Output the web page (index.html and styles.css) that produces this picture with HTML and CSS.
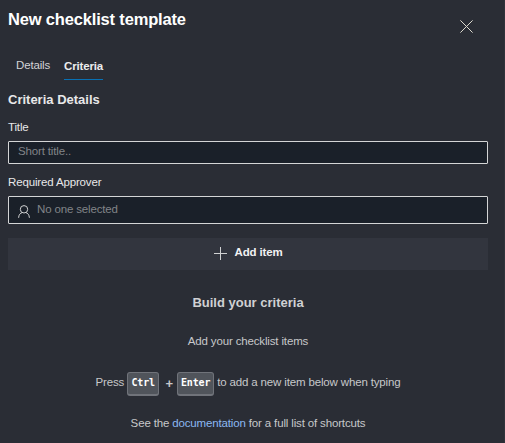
FILE: index.html
```html
<!DOCTYPE html>
<html lang="en">
<head>
<meta charset="utf-8">
<title>New checklist template</title>
<link rel="stylesheet" href="styles.css">
</head>
<body>
<main class="panel">
  <header class="header">
    <h1>New checklist template</h1>
    <button class="close" aria-label="Close"><svg width="13" height="13" viewBox="0 0 13 13"><path d="M.4.4l12.2 12.2M12.6.4L.4 12.6"/></svg></button>
  </header>
  <nav class="tabs">
    <a class="tab">Details</a>
    <a class="tab active">Criteria</a>
  </nav>
  <h2>Criteria Details</h2>
  <div class="label">Title</div>
  <div class="field short"><span>Short title..</span></div>
  <div class="label second">Required Approver</div>
  <div class="field person">
    <svg width="12" height="13" viewBox="0 0 12 13"><circle cx="6" cy="4.3" r="3.7"/><path d="M.6 12.8c.2-3.1 1.7-4.8 3.6-5.2M11.4 12.8c-.2-3.1-1.7-4.8-3.6-5.2"/></svg>
    <span>No one selected</span>
  </div>
  <button class="add"><svg width="13" height="13" viewBox="0 0 13 13"><path d="M6.5 0v13M0 6.5h13"/></svg><span>Add item</span></button>
  <section class="empty">
    <h3>Build your criteria</h3>
    <p class="intro">Add your checklist items</p>
    <p class="keys"><span>Press</span><kbd class="ctrl">Ctrl</kbd><b>+</b><kbd class="enter">Enter</kbd><span>to add a new item below when typing</span></p>
    <p class="docs">See the <a>documentation</a> for a full list of shortcuts</p>
  </section>
</main>
</body>
</html>
```
FILE: styles.css
```css
* { box-sizing: border-box; }
body {
  margin: 0;
  width: 505px;
  height: 443px;
  overflow: hidden;
  background: #2a2d35;
  color: #e8e8e9;
  font: 11.5px/16px "Liberation Sans", Arial, sans-serif;
  letter-spacing: -.15px;
}
h1, h2, h3, p { margin: 0; }
button { border: 0; padding: 0; color: inherit; font: inherit; letter-spacing: inherit; }
svg { display: block; fill: none; stroke: #d0d1d2; stroke-width: 1; flex: none; }
.panel { height: 443px; padding: 0 16px 0 8px; border-right: 1px solid #30333b; width: 505px; }
.header { display: flex; justify-content: space-between; height: 56px; }
h1 { margin-top: 8px; font-size: 16.5px; line-height: 23px; letter-spacing: -.17px; color: #fff; }
.close { width: 13px; height: 13px; margin: 20px 15px 0 0; background: none; }
.close svg { stroke: #dedbd0; }
.tabs { display: flex; gap: 14px; height: 24px; padding-left: 8px; }
.tab { height: 24px; line-height: 18px; color: #d2d3d5; }
.tab:first-child { width: 34px; }
.active { width: 39px; line-height: 20px; font-weight: bold; color: #ececed; border-bottom: 1px solid #0871b5; }
h2 { margin-top: 11px; font-size: 13px; line-height: 18px; letter-spacing: 0; }
.label { margin-top: 10px; height: 22px; }
.second { margin-top: 10px; }
.field { display: flex; align-items: center; border: 1px solid #d4d5d6; border-radius: 1px; background: #1a2029; color: #818488; }
.short { height: 23px; padding: 0 9px 3px; }
.person { height: 28px; padding: 0 9px; gap: 7px; }
.person svg { margin-top: 2px; }
.person span { margin-top: -2px; }
.add { display: flex; justify-content: center; width: 480px; height: 32px; margin-top: 13.5px; padding-top: 8px; gap: 8px; background: #32353e; color: #f2f2f3; font-weight: bold; line-height: 13px; }
.add svg { margin-top: 1px; }
.empty { color: #c7c8ca; text-align: center; }
h3 { margin-top: 23.5px; font-size: 13px; line-height: 20px; letter-spacing: 0; color: #d0d1d3; }
.intro { margin-top: 20px; }
.keys { display: flex; justify-content: center; height: 24px; margin-top: 23px; line-height: 20px; white-space: nowrap; }
.keys b { width: 18px; font-size: 13px; line-height: 24px; padding-left: 2px; }
kbd { height: 24px; border: 1px solid #70737a; border-bottom-width: 2px; border-radius: 3px; background: #50545b; color: #fff; font: bold 10px/19px "DejaVu Sans Mono", monospace; letter-spacing: -.15px; }
.ctrl { width: 32px; margin-left: 3px; }
.enter { width: 37px; margin-right: 3px; }
.docs { margin-top: 19px; }
.docs a { color: #8ab8f2; }
```
